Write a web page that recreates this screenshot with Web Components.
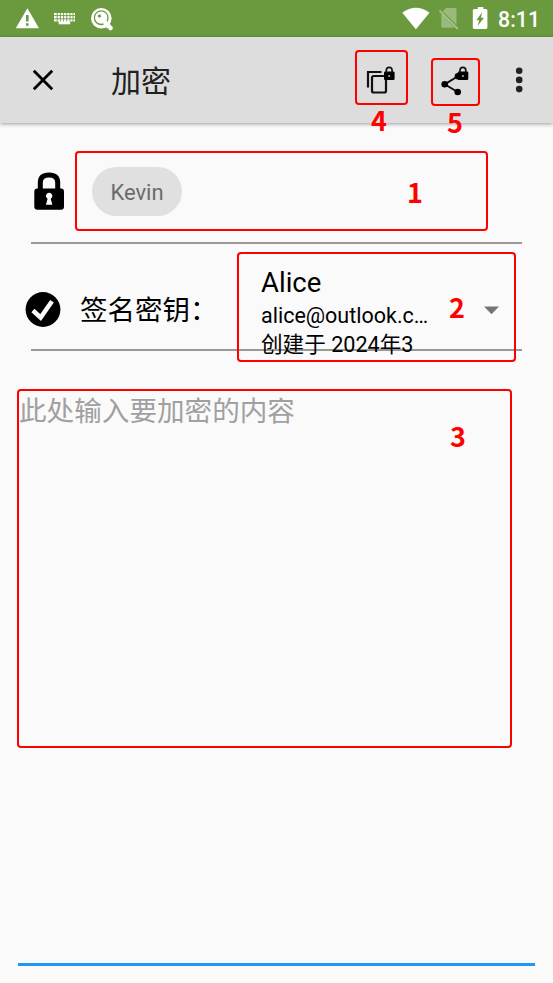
<!DOCTYPE html>
<html lang="zh-CN">
<head>
<meta charset="utf-8">
<title>加密</title>
<style>
html,body{margin:0;padding:0;background:#fafafa}
body{font-family:Roboto,"Noto Sans CJK SC",sans-serif;color:#000;overflow:hidden}
</style>
</head>
<body>
<encrypt-screen></encrypt-screen>
<script>
function define(name, html) {
  const template = document.createElement('template');
  template.innerHTML = html;
  customElements.define(name, class extends HTMLElement {
    constructor() {
      super();
      this.attachShadow({ mode: 'open' }).append(template.content.cloneNode(true));
    }
  });
}

define('status-bar', `
<style>
:host{display:flex;align-items:center;justify-content:space-between;height:37px;flex:none;background:#6b9a3e;color:#fff}
svg{display:block}
.left{padding-left:14px}
.right{display:flex;align-items:center;padding-right:13px}
.time{font:500 21.3px/37px Roboto,sans-serif;margin:2px 0 0 9px}
</style>
<svg class="left" width="110" height="37" viewBox="14 0 110 37" fill="#fff">
  <path fill-rule="evenodd" d="M27.4 8.2 39 28.3H15.8ZM26 15v6.5h2.6V15ZM26 23.2v2.6h2.6v-2.6Z"/>
  <path d="M54 13h21v9H54z"/>
  <rect x="58.6" y="22" width="11.6" height="2.3"/>
  <path d="M54 15.6h21M54 18.8h21M54 21.9h4.5M70.4 21.9H75M57.2 13v8.5M60.4 13v8.5M63.6 13v8.5M66.8 13v8.5M70 13v8.5M73 13v8.5" stroke="#6b9a3e" stroke-width=".9"/>
  <circle cx="101.3" cy="18.3" r="10.3"/>
  <g stroke="#6b9a3e" fill="none"><circle cx="101.2" cy="17.7" r="6.8" stroke-width="1.3"/><circle cx="99.4" cy="16" r="1.6" fill="#6b9a3e" stroke="none"/></g>
  <path d="m105.300 19.800 7.400 7.100v2l-1.200 1.300h-2.200l-1.200-2h-1.800v-1.700h-1.600l-1.500-2.800"/>
</svg>
<div class="right">
<svg width="90" height="37" viewBox="399.500 0 90 37" fill="#fff">
  <path d="M402.8 12.7Q416.4 2.8 430 12.7L416.4 29.2Z"/>
  <path opacity=".32" d="M446.7 8H455.5Q457 8 457 9.5V24.8L443.2 11.2ZM441.8 13.5 455 27.8H443.4Q441.8 27.8 441.8 26.2Z"/>
  <path opacity=".4" d="m440 10.6 18.4 18.4" stroke="#fff" stroke-width="1.8"/>
  <path fill-rule="evenodd" d="M478.300 7h5.600v2h2.500q1.500 0 1.500 1.500v17q0 1.400-1.500 1.400h-11.600q-1.500 0-1.500-1.400v-17Q473.300 9 474.800 9h3.500ZM482.600 12.300 476.800 20.200h2.800L478.300 25.800 484.500 17.800h-3Z"/>
</svg>
<span class="time">8:11</span>
</div>`);

define('tool-bar', `
<style>
:host{display:flex;align-items:center;flex:none;height:86px;background:#ddd;box-shadow:0 1px 4px rgba(0,0,0,.38);position:relative}
svg{display:block;flex:none}
.title{font:30px/44px "Noto Sans CJK SC",sans-serif;color:#212121;margin:0 auto 2px 57px}
.close{margin-left:32px;width:22px;height:22px}
</style>
<svg class="close" viewBox="0 0 22 22"><path d="M1.800 1.800 20.200 20.200M20.200 1.800 1.800 20.200" stroke="#000" stroke-width="2.800"/></svg>
<span class="title">加密</span>
<svg width="193" height="86" viewBox="360 37 193 86" fill="none" stroke="#111" stroke-width="2">
  <path d="M368 87.500V72H381.500" stroke-width="2.200"/>
  <rect x="372" y="76" width="14" height="16.500" rx="1.800" stroke-width="2.200"/>
  <rect x="384" y="71.500" width="10.600" height="8.500" rx="1.300" fill="#000" stroke="none"/>
  <path d="M386.300 73V70.400Q386.300 67.300 389.200 67.300T392.100 70.400V73" stroke-width="1.700"/>
  <circle cx="389.200" cy="76" r="1.100" fill="#aaa" stroke="none"/>
  <path d="M457.500 76.500 444.700 84.300 457.700 92" />
  <g fill="#000" stroke="none"><circle cx="444.700" cy="84.300" r="3.300"/><circle cx="457.700" cy="92" r="3.300"/><circle cx="458" cy="76.300" r="3.300"/><rect x="457.700" y="71.500" width="10.600" height="8.500" rx="1.300"/></g>
  <path d="M460 73V70.400Q460 67.300 462.900 67.300T465.800 70.400V73" stroke-width="1.700"/>
  <circle cx="462.900" cy="76" r="1.100" fill="#aaa" stroke="none"/>
  <g fill="#212121" stroke="none"><circle cx="519.200" cy="70.700" r="3.300"/><circle cx="519.200" cy="79.900" r="3.300"/><circle cx="519.200" cy="89.100" r="3.300"/></g>
</svg>`);

define('key-chip', `
<style>
:host{display:flex;align-items:center;justify-content:center;box-sizing:border-box;width:90px;height:49px;border-radius:25px;background:#e0e0e0;color:#6b6b6b;font:22px/26px Roboto,sans-serif;padding-top:2px}
</style><slot></slot>`);

define('form-row', `
<style>
:host{display:flex;box-sizing:border-box;flex:none;margin:0 31px;border-bottom:2px solid #999}
</style><slot></slot>`);

define('key-select', `
<style>
:host{display:grid;grid-template-columns:168px auto;column-gap:54px;align-items:center;color:#000}
.lines{white-space:nowrap}
.name{font-size:27.500px;line-height:36px}
.mail{font-size:21.500px;line-height:29px}
.date{font-size:21.600px;line-height:29px}
svg{display:block;margin-bottom:4px}
</style>
<div class="lines"><div class="name"><slot name="name"></slot></div><div class="mail"><slot name="mail"></slot></div><div class="date"><slot name="date"></slot></div></div>
<svg width="17" height="9" viewBox="0 0 17 9"><path d="M1 .5h15L8.500 8.200Z" fill="#757575"/></svg>`);

define('message-field', `
<style>
:host{display:block;flex:1;margin:38px 18px 17px;border-bottom:3px solid #2196f3;color:#a0a0a0;font:27.600px/40px "Noto Sans CJK SC",sans-serif;text-indent:1px}
</style><slot></slot>`);

/* Numbered callout frame laid over the screen */
define('callout-frame', `
<style>
:host{position:absolute;box-sizing:border-box;border:2px solid #f00;border-radius:4px}
span{position:absolute;left:var(--nx);top:var(--ny);font:700 27px/40px "Noto Sans CJK SC",sans-serif;color:#f00}
</style><span><slot></slot></span>`);

define('encrypt-screen', `
<style>
:host{display:flex;flex-direction:column;position:relative;width:553px;height:983px;background:#fafafa;overflow:hidden}
svg{display:block;flex:none}
.to{height:121px}
.to svg{margin:49px 0 0 2px}
.to key-chip{margin:44px 0 0 27px}
.from{height:107px}
.from svg{margin:48px 0 0 -6px}
.label{font:27.500px/40px "Noto Sans CJK SC",sans-serif;margin:44px 0 0 19px;width:151px;white-space:nowrap}
key-select{margin:21px 0 -9px 30px;align-self:flex-start}
</style>
<status-bar></status-bar>
<tool-bar></tool-bar>
<form-row class="to">
  <svg width="32" height="38" viewBox="33 172 32 38"><path d="M40.300 190V182.500Q40.300 174.900 49 174.900T57.700 182.500V190" fill="none" stroke="#000" stroke-width="5"/><path fill-rule="evenodd" d="M37.500 188.500h23.500q3 0 3 3v15.300q0 3-3 3H37.500q-3.200 0-3.200-3v-15.300q0-3 3.200-3ZM47.600 198.800l-1.700 6h6.500l-1.700-6a3.200 3.200 0 1 0-3.100 0Z"/></svg>
  <key-chip>Kevin</key-chip>
</form-row>
<form-row class="from">
  <svg width="36" height="36" viewBox="0 0 36 36"><circle cx="18" cy="17.500" r="17.400"/><path d="m7.900 18.500 7.700 7L27 9.200" fill="none" stroke="#fafafa" stroke-width="4.500"/></svg>
  <div class="label">签名密钥：</div>
  <key-select><span slot="name">Alice</span><span slot="mail">alice@outlook.c…</span><span slot="date">创建于 2024年3</span></key-select>
</form-row>
<message-field>此处输入要加密的内容</message-field>
<callout-frame style="left:75px;top:151px;width:413px;height:80px;--nx:330px;--ny:19px">1</callout-frame>
<callout-frame style="left:237px;top:252px;width:279px;height:110px;--nx:210px;--ny:33px">2</callout-frame>
<callout-frame style="left:17px;top:389px;width:495px;height:359px;--nx:431px;--ny:25px">3</callout-frame>
<callout-frame style="left:355px;top:50px;width:53px;height:55px;--nx:14px;--ny:48px">4</callout-frame>
<callout-frame style="left:431px;top:58px;width:49px;height:48px;--nx:14px;--ny:42px">5</callout-frame>`);
</script>
</body>
</html>
